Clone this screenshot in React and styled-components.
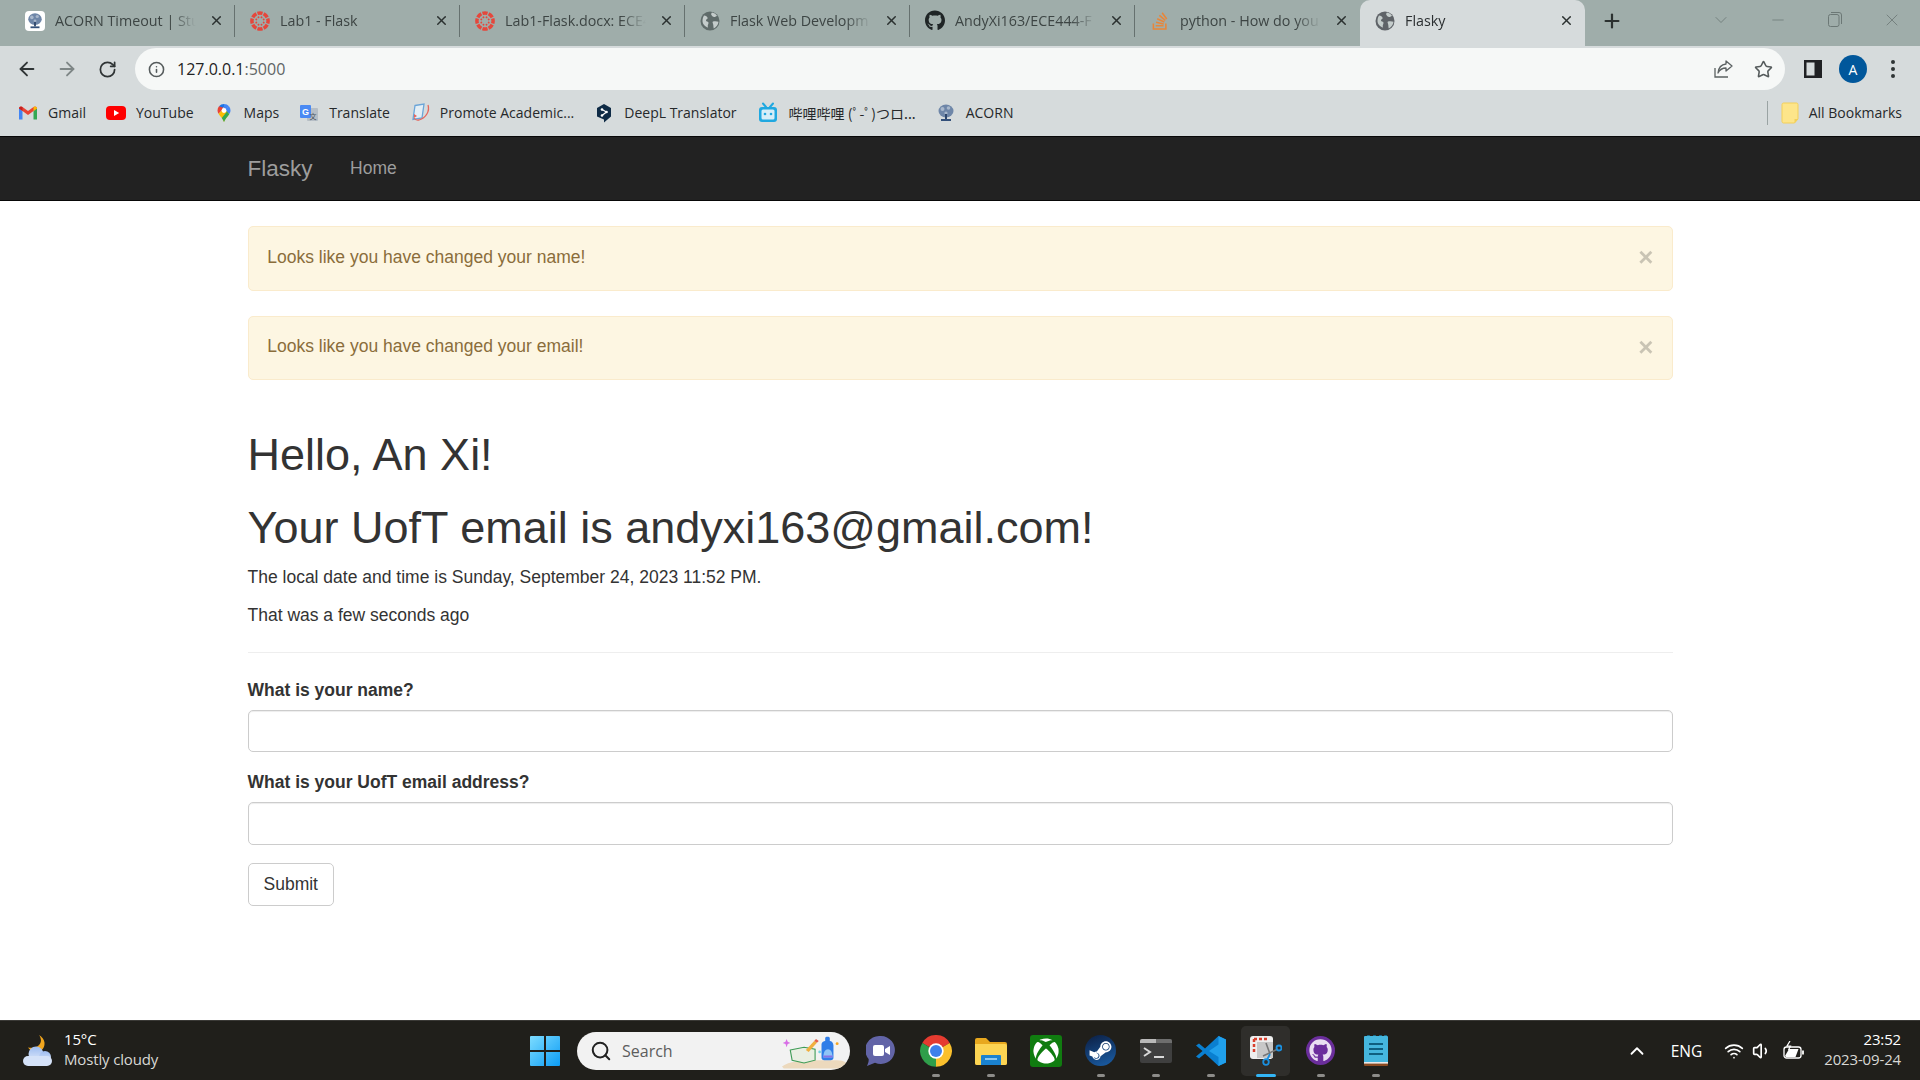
import React from "react";
import styled, { createGlobalStyle } from "styled-components";
import { FaGithub, FaSteamSymbol, FaXbox, FaStackOverflow } from "react-icons/fa";
import { Wifi, Volume1, ChevronUp, Search as SearchGlyph, ArrowLeft, ArrowRight, RotateCw, Info, Star, X, Plus, Minus, ChevronDown } from "lucide-react";

const GlobalStyle = createGlobalStyle`
  html, body { margin: 0; padding: 0; background: #fff; overflow: hidden; }
  * { box-sizing: border-box; }
`;

const UI_FONT = `"Open Sans", "Noto Sans", "Noto Sans CJK SC", sans-serif`;
const WEB_FONT = `"Liberation Sans", Arial, sans-serif`;

const Screen = styled.div`
  width: 1920px;
  height: 1080px;
  display: flex;
  flex-direction: column;
  overflow: hidden;
`;

/* ---------- browser chrome ---------- */
const TabStrip = styled.div`
  height: 46px;
  padding-left: 10px;
  background: #9fadaa;
  display: flex;
  align-items: stretch;
  flex: none;
`;

const Tab = styled.div`
  width: 225px;
  padding: 0 11px 5px 15px;
  display: flex;
  align-items: center;
  position: relative;
  font: 14.3px ${UI_FONT};
  color: ${({ $active }) => ($active ? "#2b2f31" : "#3d4544")};
  background: ${({ $active }) => ($active ? "#d6dbdc" : "transparent")};
  border-radius: ${({ $active }) => ($active ? "10px 10px 0 0" : "0")};

  &::after {
    content: "";
    display: ${({ $active, $last }) => ($active || $last ? "none" : "block")};
    position: absolute;
    right: 0;
    top: 5px;
    bottom: 9px;
    width: 1px;
    background: #66716f;
  }
`;

const TabIcon = styled.span`
  width: 20px;
  height: 20px;
  flex: none;
  display: flex;
  align-items: center;
  justify-content: center;
`;

const TabTitle = styled.span`
  margin-left: 10px;
  flex: 1;
  min-width: 0;
  white-space: nowrap;
  -webkit-mask-image: linear-gradient(to right, #000 82%, transparent 100%);
  mask-image: linear-gradient(to right, #000 82%, transparent 100%);
`;

const TabClose = styled.span`
  width: 16px;
  height: 16px;
  flex: none;
  margin-left: 12px;
  color: #2b3130;
  display: flex;
  align-items: center;
  justify-content: center;
`;

const NewTab = styled.div`
  width: 54px;
  padding-bottom: 5px;
  display: flex;
  align-items: center;
  justify-content: center;
  color: #2b3130;
`;

const WindowControls = styled.div`
  margin-left: auto;
  padding-bottom: 7px;
  display: flex;
  align-items: center;
  color: #6c7876;
`;

const WindowButton = styled.span`
  width: 57px;
  display: flex;
  justify-content: center;
`;

const Toolbar = styled.div`
  height: 46px;
  flex: none;
  background: #d6dbdc;
  display: flex;
  align-items: center;
  padding: 0 0 0 7px;
  color: #2f3435;
`;

const NavButton = styled.span`
  width: 40px;
  display: flex;
  justify-content: center;
  color: ${({ $muted }) => ($muted ? "#7e8686" : "#2f3435")};
`;

const Omnibox = styled.div`
  margin-left: 8px;
  margin-right: 8px;
  width: 1650px;
  height: 42px;
  border-radius: 21px;
  background: #f6f8f7;
  display: flex;
  align-items: center;
  padding: 0 2px 0 13px;
`;

const Url = styled.span`
  margin-left: 12px;
  font: 16px ${UI_FONT};
  color: #1f2324;
  flex: 1;
  & > em { font-style: normal; color: #5f6566; }
`;

const OmniAction = styled.span`
  width: 40px;
  display: flex;
  justify-content: center;
  color: #555b5c;
`;

const ToolAction = styled.span`
  width: 40px;
  display: flex;
  justify-content: center;
`;

const Avatar = styled.span`
  width: 28px;
  height: 28px;
  border-radius: 50%;
  background: #01579b;
  color: #fff;
  font: 14px ${UI_FONT};
  display: flex;
  align-items: center;
  justify-content: center;
`;

const BookmarkBar = styled.div`
  height: 44px;
  flex: none;
  background: #d6dbdc;
  display: flex;
  align-items: center;
  padding: 0 18px 3px;
  font: 14px ${UI_FONT};
  color: #26292b;
`;

const Bookmark = styled.div`
  display: flex;
  align-items: center;
  gap: ${({ $tight }) => ($tight ? "8px" : "10px")};
  margin-right: 20px;
  white-space: nowrap;
`;

const BookmarkLabel = styled.span`
  font-family: ${({ $cjk }) => ($cjk ? `"Noto Sans CJK JP", sans-serif` : "inherit")};
`;

const BookmarkEnd = styled.div`
  margin-left: auto;
  display: flex;
  align-items: center;
  gap: 10px;
  border-left: 1px solid #9aa3a3;
  height: 24px;
  padding-left: 13px;
  white-space: nowrap;
`;

/* ---------- flasky page ---------- */
const Navbar = styled.nav`
  height: 65px;
  flex: none;
  background: #222;
  border: 1.25px solid #080808;
  border-width: 1.25px 0;
  padding-left: 247.5px;
  display: flex;
  align-items: center;
  font-family: ${WEB_FONT};
  color: #9d9d9d;
`;

const Brand = styled.span`
  font-size: 22.5px;
`;

const NavLink = styled.span`
  font-size: 17.5px;
  margin-left: 37.5px;
`;

const Main = styled.main`
  flex: 1;
  min-height: 0;
  padding: 25px 247.5px 0;
  background: #fff;
  font: 17.5px/25px ${WEB_FONT};
  color: #333;
`;

const Alert = styled.div`
  height: 64.5px;
  margin-bottom: 25px;
  padding: 0 18px 2px 18.75px;
  display: flex;
  align-items: center;
  justify-content: space-between;
  background: #fdf6e2;
  border: 1.25px solid #faebcc;
  border-radius: 5px;
  color: #8a6d3b;
`;

const CloseMark = styled.span`
  font-size: 26px;
  font-weight: bold;
  color: #000;
  opacity: 0.2;
  line-height: 1;
`;

const Greeting = styled.section`
  margin-top: 50px;
`;

const Heading = styled.h1`
  margin: 23.5px 0 12.5px;
  font-size: 45px;
  line-height: 49.5px;
  font-weight: 500;
  color: #333;
`;

const Para = styled.p`
  margin: 0 0 12.5px;
`;

const Rule = styled.hr`
  margin: 24px 0 25px;
  border: 0;
  border-top: 1.25px solid #eee;
`;

const Field = styled.div`
  margin-bottom: 18.25px;
`;

const Label = styled.label`
  display: block;
  margin-bottom: 7px;
  font-weight: bold;
`;

const Input = styled.input`
  display: block;
  width: 100%;
  height: 42.5px;
  border: 1.25px solid #ccc;
  border-radius: 5px;
  background: #fff;
  box-shadow: inset 0 1px 1px rgba(0, 0, 0, 0.075);
`;

const SubmitButton = styled.button`
  height: 42.5px;
  padding: 0 15px;
  border: 1.25px solid #ccc;
  border-radius: 5px;
  background: #fff;
  font: 17.5px ${WEB_FONT};
  color: #333;
`;

/* ---------- taskbar ---------- */
const Taskbar = styled.footer`
  height: 60px;
  flex: none;
  background: #201f1b;
  border-top: 1px solid #3a3936;
  display: grid;
  grid-template-columns: 517.5px auto 1fr;
  align-items: center;
  font-family: ${UI_FONT};
  color: #fff;
`;

const Weather = styled.div`
  display: flex;
  align-items: center;
  padding-left: 22px;
  gap: 10px;
`;

const StackedText = styled.div`
  font-size: 15px;
  line-height: 20px;
  letter-spacing: -0.15px;
  padding-bottom: 4px;
  text-align: ${({ $right }) => ($right ? "right" : "left")};
  margin-left: ${({ $right }) => ($right ? "16px" : "0")};
  & > div:last-child { color: #d8d8d5; }
`;

const AppRow = styled.div`
  display: flex;
  align-items: center;
`;

const AppSlot = styled.div`
  width: 55px;
  height: 59px;
  display: flex;
  align-items: center;
  justify-content: center;
  position: relative;

  &::before {
    content: "";
    display: ${({ $active }) => ($active ? "block" : "none")};
    position: absolute;
    inset: 5px 3px 4px;
    background: rgba(255, 255, 255, 0.07);
    border-radius: 5px;
  }

  & > svg { position: relative; }

  &::after {
    content: "";
    display: ${({ $running }) => ($running ? "block" : "none")};
    position: absolute;
    left: 50%;
    bottom: 3px;
    transform: translateX(-50%);
    width: ${({ $active }) => ($active ? "20px" : "8px")};
    height: 3px;
    border-radius: 2px;
    background: ${({ $active }) => ($active ? "#33b5f5" : "#8d8c89")};
  }
`;

const SearchPill = styled.div`
  width: 273px;
  height: 38px;
  margin: 0 3px 0 4.5px;
  border-radius: 19px;
  background: #f2f2f2;
  display: flex;
  align-items: center;
  padding-left: 13px;
  overflow: hidden;
  color: #222;
`;

const SearchText = styled.span`
  margin-left: 10px;
  flex: 1;
  font-size: 16px;
  color: #5d5d5d;
`;

const Tray = styled.div`
  display: flex;
  align-items: center;
  justify-content: flex-end;
  padding-right: 19px;
`;

const TrayText = styled.span`
  font-size: 15.5px;
  margin: 0 18px 0 23px;
`;

const TrayIcon = styled.span`
  width: 28px;
  margin-left: ${({ $gap }) => ($gap ? "4px" : "0")};
  display: flex;
  justify-content: center;
`;

/* ---------- icons ---------- */
const Globe = ({ color = "#5f6b6a" }) => (
  <svg width="20" height="20" viewBox="0 0 20 20">
    <circle cx="10" cy="10" r="9.5" fill={color} />
    <path d="M4 4.5c2 .2 3.2 1 3.6 2.3.3 1-1 1.3-1.5 2.2-.5.9.8 1.6 1.6 1.8.9.2 1 1.4.6 2.2-.4.8-.9 1.8-.2 3.6-3-.9-5.600-3.600-5.600-6.600 0-2.200.6-4 1.500-5.500z" fill="#c4cccb" />
    <path d="M12 1.500c2 .3 3.800 1.500 5 3.200-1.200.6-1.600 1.400-2.800 1.300-1.500-.1-2.300-1.200-2.900-2.200-.4-.7 0-1.500.7-2.300zM13 10.500c1.500-.5 4-.4 5.500.2-.4 3-2.200 5.500-4.700 6.800-.5-1.500-.3-2.800-.6-4-.2-1.100-1.200-2.600-.2-3z" fill="#c4cccb" />
  </svg>
);

const Canvas = () => {
  const spokes = [0, 45, 90, 135, 180, 225, 270, 315];
  return (
    <svg width="22" height="22" viewBox="1.5 1.5 21 21">
      {spokes.map((a) => (
        <g key={a} transform={`rotate(${a} 12 12)`}>
          <path d="M8.800 2.200a10.200 10.200 0 0 1 6.400 0l-1.100 3.500a6.500 6.500 0 0 0-4.200 0z" fill="#e5473c" />
          <circle cx="12" cy="7.800" r="1" fill="#e5473c" transform="rotate(22.5 12 12)" />
        </g>
      ))}
    </svg>
  );
};

const Acorn = ({ size = 20 }) => (
  <svg width={size} height={size} viewBox="0 0 20 20">
    <ellipse cx="10" cy="8" rx="7.500" ry="6.500" fill="#6e86a8" />
    <circle cx="6.500" cy="6" r="2" fill="#a9b8cc" />
    <circle cx="12.500" cy="5" r="1.800" fill="#a9b8cc" />
    <circle cx="10" cy="10" r="1.600" fill="#a9b8cc" />
    <rect x="9" y="11" width="2" height="5" fill="#2e466b" />
    <rect x="5" y="16" width="10" height="2" fill="#33507a" />
  </svg>
);

const AcornTab = styled.span`
  width: 20px;
  height: 20px;
  border-radius: 4px;
  background: #fff;
  display: flex;
  align-items: center;
  justify-content: center;
`;

const Gmail = () => (
  <svg width="20" height="20" viewBox="0 0 20 20">
    <path d="M1 5v11.500h3.500V8z" fill="#4285f4" />
    <path d="M19 5v11.500h-3.500V8z" fill="#34a853" />
    <path d="M1 5.500C1 3.500 3 2.800 4.500 3.900L10 8l5.500-4.100C17 2.800 19 3.500 19 5.500L15.500 8 10 12 4.500 8z" fill="#ea4335" />
    <path d="M15.500 3.900C17 2.800 19 3.500 19 5.500L15.500 8z" fill="#fbbc04" />
    <path d="M4.500 3.900C3 2.800 1 3.500 1 5.500L4.500 8z" fill="#c5221f" />
  </svg>
);

const YouTube = () => (
  <svg width="20" height="20" viewBox="0 0 20 20">
    <rect y="3" width="20" height="14" rx="4" fill="#f00" />
    <path d="M8 7l5.200 3L8 13z" fill="#fff" />
  </svg>
);

const MapsPin = () => (
  <svg width="20" height="20" viewBox="0 0 20 20">
    <path d="M10 1a6.500 6.500 0 0 1 5 2.300L10 8z" fill="#4285f4" />
    <path d="M10 1a6.500 6.500 0 0 0-5 2.300l2.500 2.700L10 4z" fill="#1a73e8" />
    <path d="M5 3.300A6.500 6.500 0 0 0 3.500 7.500c0 1.200.5 2.300 1 3.200L10 5z" fill="#ea4335" />
    <path d="M15 3.300a6.500 6.500 0 0 1 1.500 4.200c0 1.500-.6 2.600-1.300 3.700L10 7z" fill="#4285f4" />
    <path d="M4.500 10.700l5.500-5 5.200 5.500c-1.500 2.300-4 4.300-5.200 7.800-1-3.300-4-5.800-5.500-8.300z" fill="#fbbc04" />
    <path d="M15.200 11.200c-1.500 2.300-4 4.300-5.200 7.800-.5-1.500-1.300-2.800-2.200-4L13 8.500z" fill="#34a853" />
    <circle cx="10" cy="7.500" r="2.400" fill="#fff" />
  </svg>
);

const Translate = () => (
  <svg width="20" height="20" viewBox="0 0 20 20">
    <rect x="8" y="5" width="11" height="13" rx="1" fill="#b6bec6" />
    <rect x="1" y="2" width="11" height="13" rx="1" fill="#4a8af4" />
    <text x="6.500" y="12" fontSize="9" fontFamily={WEB_FONT} fontWeight="bold" fill="#fff" textAnchor="middle">G</text>
    <text x="14" y="16" fontSize="7" fontFamily="Noto Sans CJK SC" fill="#4b5560" textAnchor="middle">文</text>
  </svg>
);

const Promote = () => (
  <svg width="22" height="22" viewBox="0 0 22 22" fill="none">
    <path d="M5 3.500l9-1.500-2 14-9 1.500z" stroke="#6aa5d8" strokeWidth="1.300" fill="#e3eef5" />
    <path d="M18 3c2 6-2 13-9 15-2 .5-4-.5-5-2" stroke="#e5665c" strokeWidth="1.300" />
    <path d="M4 12l3 2-3 2z" fill="#e5665c" />
  </svg>
);

const DeepL = () => (
  <svg width="20" height="20" viewBox="0 0 20 20">
    <path d="M10 1l7 4v8.500l-7 6v-3l-7-3V5z" fill="#0f2b46" />
    <path d="M8 6.500l4.500 2.500L8 12.500" stroke="#fff" strokeWidth="1.200" fill="none" />
    <circle cx="8" cy="6.500" r="1.300" fill="#fff" />
    <circle cx="12.500" cy="9" r="1.300" fill="#fff" />
    <circle cx="8" cy="12.500" r="1.300" fill="#fff" />
  </svg>
);

const Bili = () => (
  <svg width="22" height="22" viewBox="0 0 22 22">
    <path d="M6 1.500L9 5M16 1.500L13 5" stroke="#20a8e0" strokeWidth="2" strokeLinecap="round" />
    <rect x="2" y="5" width="18" height="15" rx="3" fill="#20a8e0" />
    <rect x="4.500" y="7.500" width="13" height="10" rx="1.500" fill="#d6eef8" />
    <circle cx="8" cy="12" r="1.300" fill="#20a8e0" />
    <circle cx="14" cy="12" r="1.300" fill="#20a8e0" />
  </svg>
);

const Folder = () => (
  <svg width="18" height="22" viewBox="0 0 18 22">
    <path d="M1 2.500C1 1.700 1.700 1 2.500 1h13c.8 0 1.500.7 1.500 1.500V17l-3.500 4h-11C1.700 21 1 20.300 1 19.500z" fill="#fde58a" stroke="#f3cf58" />
    <path d="M13.500 21v-4H17z" fill="#f3cf58" />
  </svg>
);

const SidePanel = () => (
  <svg width="18" height="18" viewBox="0 0 18 18">
    <rect width="18" height="18" fill="#202124" />
    <rect x="2.500" y="2.500" width="8" height="13" fill="#d6dbdc" />
  </svg>
);

const Share = () => (
  <svg width="20" height="20" viewBox="0 0 20 20" fill="none" stroke="#5b6162" strokeWidth="1.300">
    <path d="M2 9v9h13" />
    <path d="M13 2l6 5-6 5V9C9 9 6.500 11 5 14c.5-5 3.500-8.500 8-9z" strokeLinejoin="round" />
  </svg>
);

const Dots = () => (
  <svg width="6" height="20" viewBox="0 0 6 20" fill="#2f3435">
    <circle cx="3" cy="3" r="2" />
    <circle cx="3" cy="10" r="2" />
    <circle cx="3" cy="17" r="2" />
  </svg>
);

const Restore = () => (
  <svg width="14" height="15" viewBox="0 0 14 15" fill="none" stroke="currentColor">
    <rect x=".5" y="2.500" width="10.500" height="12" rx="2" />
    <path d="M3 .5h8a2.500 2.500 0 0 1 2.500 2.500v9" />
  </svg>
);

const WeatherIcon = () => (
  <svg width="32" height="36" viewBox="0 0 32 36">
    <defs>
      <linearGradient id="cloud" x1="0" y1="0" x2="0" y2="1">
        <stop offset="0" stopColor="#9dbcf0" />
        <stop offset="1" stopColor="#dfe9fa" />
      </linearGradient>
    </defs>
    <path d="M17 2c2.500 3.500 3 8-1 11-2.500 1.800-6 2-10 1.500 2 3 5 5 9 4.500 5-.5 8-4.500 7.500-9.500-.4-3-2.500-6-5.500-7.500z" fill="#f0a51e" />
    <circle cx="14" cy="21" r="7.500" fill="url(#cloud)" />
    <circle cx="23" cy="24" r="6" fill="url(#cloud)" />
    <rect x="1" y="23" width="29" height="10" rx="5" fill="#d5e2f8" />
  </svg>
);

const StartLogo = () => (
  <svg width="30" height="30" viewBox="0 0 30 30">
    <defs>
      <linearGradient id="win" x1="0" y1="0" x2="1" y2="1">
        <stop offset="0" stopColor="#7ddcff" />
        <stop offset="1" stopColor="#0c9cf5" />
      </linearGradient>
    </defs>
    <path d="M1 0h13v14H0V1a1 1 0 0 1 1-1zM16 0h13a1 1 0 0 1 1 1v13H16zM0 16h14v14H1a1 1 0 0 1-1-1zM16 16h14v13a1 1 0 0 1-1 1H16z" fill="url(#win)" />
  </svg>
);

const SearchArt = () => (
  <svg width="68" height="38" viewBox="0 0 74 38">
    <path d="M0 36c8-6 20-7 36-7h24c8 0 12 3 14 9H2z" fill="#ecd9bd" />
    <path d="M5 6l1.200 3 3 1.200-3 1.200L5 15l-1.200-3.600-3-1.200 3-1.200z" fill="#d86ee6" />
    <path d="M9 18l15-3 12 2v12l-12 3-13-3z" fill="#e9efe2" stroke="#3e9b55" strokeWidth="1.200" />
    <path d="M26 18l9-10 3 2-9 10z" fill="#f0b040" />
    <path d="M35 8l2-2 3 2-2 2z" fill="#e5604a" />
    <circle cx="41" cy="20" r="1.500" fill="#6fd4e0" />
    <path d="M43 12c0-3 3-4 4-4V5c0-2 5-2 5 0v3c2 0 4 2 4 5v13c0 2-1 3-3 3h-7c-2 0-3-1-3-3z" fill="#2f7de8" />
    <path d="M45 26c0-6 2-9 5-9s5 3 5 9z" fill="#8fc4f7" />
    <path d="M45 24h10v2H45z" fill="#8873e6" />
    <circle cx="60" cy="11" r="1.600" fill="#f5a623" />
  </svg>
);

const Meet = () => (
  <svg width="30" height="32" viewBox="0 0 30 32">
    <path d="M15 1a14 14 0 1 1-6 26.700L1 31c1-2 2-5 1.600-7A14 14 0 0 1 15 1z" fill="#6264a7" />
    <rect x="7" y="10" width="11" height="11" rx="2" fill="#fff" />
    <path d="M19 14l5-3v9l-5-3z" fill="#fff" />
  </svg>
);

const Chrome = () => (
  <svg width="32" height="32" viewBox="0 0 48 48">
    <path d="M24 24L3.500 12A23.500 23.500 0 0 1 44.500 12z" fill="#e53b30" />
    <path d="M24 24L44.500 12A23.700 23.700 0 0 1 24 47.700z" fill="#fbc02d" />
    <path d="M24 24L24 47.700A23.700 23.700 0 0 1 3.500 12z" fill="#2f9e4a" />
    <circle cx="24" cy="24" r="11.500" fill="#fff" />
    <circle cx="24" cy="24" r="9" fill="#3f80ea" />
  </svg>
);

const Files = () => (
  <svg width="32" height="28" viewBox="0 0 32 28">
    <path d="M0 3a2 2 0 0 1 2-2h9l4 4h15a2 2 0 0 1 2 2v19a2 2 0 0 1-2 2H2a2 2 0 0 1-2-2z" fill="#e8a81e" />
    <path d="M0 7h30a2 2 0 0 1 2 2v17a2 2 0 0 1-2 2H2a2 2 0 0 1-2-2z" fill="#fcd453" />
    <path d="M6 19a1 1 0 0 1 1-1h18a1 1 0 0 1 1 1v9H6z" fill="#1a82d0" />
    <rect x="10" y="21" width="12" height="2" fill="#8cc8f0" />
  </svg>
);

const XboxTile = styled.span`
  width: 32px;
  height: 32px;
  background: #107c10;
  border-radius: 3px;
  color: #fff;
  display: flex;
  align-items: center;
  justify-content: center;
`;

const SteamDisc = styled.span`
  width: 31px;
  height: 31px;
  border-radius: 50%;
  background: linear-gradient(160deg, #0c1e42, #1a5fa8);
  color: #fff;
  display: flex;
  align-items: center;
  justify-content: center;
`;

const Terminal = () => (
  <svg width="32" height="24" viewBox="0 0 32 24">
    <rect width="32" height="24" rx="2" fill="#3f3f3f" />
    <path d="M0 2a2 2 0 0 1 2-2h14v4H0z" fill="#b9b9b9" />
    <path d="M16 0h14a2 2 0 0 1 2 2v2H16z" fill="#6e6e6e" />
    <path d="M4 9l6 4-6 4" stroke="#d8d8d8" strokeWidth="2" fill="none" />
    <rect x="14" y="17" width="10" height="2" fill="#d8d8d8" />
  </svg>
);

const VsCode = () => (
  <svg width="32" height="32" viewBox="0 0 32 32">
    <path d="M23.500 1L31 4.500v23L23.500 31 10 18.500l-6 5L1 21.500 7.500 16 1 10.500l3-2 6 5z" fill="#0a7fd0" />
    <path d="M23.500 1L31 4.500v23L23.500 31V22L14 16l9.500-6.500z" fill="#20a0ec" />
  </svg>
);

const Snip = () => (
  <svg width="32" height="32" viewBox="0 0 32 32">
    <rect x="0" y="1" width="23" height="23" rx="3" fill="#efefef" />
    <path d="M4 4h13M4 4v13" stroke="#d9402e" strokeWidth="2.500" strokeDasharray="3 2" fill="none" />
    <path d="M7 7h16v16H7z" fill="#c8c8c8" />
    <path d="M16 8l4 11M28 14L13 21" stroke="#777" strokeWidth="1.600" />
    <circle cx="29" cy="13" r="2.500" stroke="#1a90e0" strokeWidth="1.800" fill="none" />
    <circle cx="16" cy="27" r="2.800" stroke="#1a90e0" strokeWidth="1.800" fill="none" />
    <path d="M20 19l-3 6" stroke="#1a90e0" strokeWidth="1.800" />
  </svg>
);

const GithubDisc = styled.span`
  width: 29px;
  height: 29px;
  border-radius: 50%;
  background: #6b2e9c;
  color: #e9dff2;
  display: flex;
  align-items: center;
  justify-content: center;
`;

const Notepad = () => (
  <svg width="24" height="32" viewBox="0 0 24 32">
    <rect y="1" width="24" height="28" rx="1" fill="#45b6de" />
    <rect y="28" width="24" height="3" rx="1" fill="#8b4a21" />
    <rect y="27" width="24" height="1.600" fill="#e8e8e8" />
    <path d="M3 1a1.500 1.500 0 0 1 3 0zM9 1a1.500 1.500 0 0 1 3 0zM15 1a1.500 1.500 0 0 1 3 0zM20 1a1.500 1.500 0 0 1 3 0z" fill="#1a6b8a" />
    <path d="M5 9h14M5 14h14M5 19h14" stroke="#0f5f80" strokeWidth="2" />
  </svg>
);

const Battery = () => (
  <svg width="22" height="20" viewBox="0 0 22 20" fill="none" stroke="#fff" strokeWidth="1.300">
    <rect x="1" y="6" width="17" height="11" rx="2.500" />
    <path d="M20 9.500v4" strokeWidth="1.800" />
    <path d="M2 15l4-7h9.500l-3 8H3z" fill="#fff" stroke="none" />
    <path d="M7 0L4 5h3.500L5.500 9" stroke="#fff" strokeWidth="1.200" />
  </svg>
);

/* ---------- data ---------- */
const tabs = [
  { title: "ACORN Timeout | Stu", icon: <AcornTab><Acorn size={18} /></AcornTab> },
  { title: "Lab1 - Flask", icon: <Canvas /> },
  { title: "Lab1-Flask.docx: ECE4", icon: <Canvas /> },
  { title: "Flask Web Developm", icon: <Globe /> },
  { title: "AndyXi163/ECE444-F", icon: <FaGithub size={21} color="#1f2526" /> },
  { title: "python - How do you", icon: <FaStackOverflow size={20} color="#e8863a" />, last: true },
  { title: "Flasky", icon: <Globe color="#5f6368" />, active: true },
];

const bookmarks = [
  { label: "Gmail", icon: <Gmail /> },
  { label: "YouTube", icon: <YouTube /> },
  { label: "Maps", icon: <MapsPin /> },
  { label: "Translate", icon: <Translate /> },
  { label: "Promote Academic...", icon: <Promote />, tight: true },
  { label: "DeepL Translator", icon: <DeepL /> },
  { label: "哔哩哔哩 (ﾟ-ﾟ)つロ...", icon: <Bili />, cjk: true },
  { label: "ACORN", icon: <Acorn /> },
];

const apps = [
  { key: "meet", icon: <Meet /> },
  { key: "chrome", icon: <Chrome />, running: true },
  { key: "files", icon: <Files />, running: true },
  { key: "xbox", icon: <XboxTile><FaXbox size={26} /></XboxTile> },
  { key: "steam", icon: <SteamDisc><FaSteamSymbol size={25} /></SteamDisc>, running: true },
  { key: "terminal", icon: <Terminal />, running: true },
  { key: "vscode", icon: <VsCode />, running: true },
  { key: "snip", icon: <Snip />, running: true, active: true },
  { key: "github", icon: <GithubDisc><FaGithub size={23} /></GithubDisc>, running: true },
  { key: "notepad", icon: <Notepad />, running: true },
];

const messages = ["Looks like you have changed your name!", "Looks like you have changed your email!"];

const App = () => {
  return (
    <Screen>
      <GlobalStyle />
      <TabStrip>
        {tabs.map((tab) => (
          <Tab key={tab.title} $active={tab.active} $last={tab.last}>
            <TabIcon>{tab.icon}</TabIcon>
            <TabTitle>{tab.title}</TabTitle>
            <TabClose><X size={15} strokeWidth={2.4} /></TabClose>
          </Tab>
        ))}
        <NewTab><Plus size={22} strokeWidth={2.4} /></NewTab>
        <WindowControls>
          <WindowButton><ChevronDown size={20} strokeWidth={1} /></WindowButton>
          <WindowButton><Minus size={18} strokeWidth={1} /></WindowButton>
          <WindowButton><Restore /></WindowButton>
          <WindowButton><X size={20} strokeWidth={1} /></WindowButton>
        </WindowControls>
      </TabStrip>

      <Toolbar>
        <NavButton><ArrowLeft size={22} /></NavButton>
        <NavButton $muted><ArrowRight size={22} /></NavButton>
        <NavButton><RotateCw size={19} strokeWidth={2.2} /></NavButton>
        <Omnibox>
          <Info size={17} color="#555b5c" strokeWidth={2.2} />
          <Url>127.0.0.1<em>:5000</em></Url>
          <OmniAction><Share /></OmniAction>
          <OmniAction><Star size={19} strokeWidth={2} /></OmniAction>
        </Omnibox>
        <ToolAction><SidePanel /></ToolAction>
        <ToolAction><Avatar>A</Avatar></ToolAction>
        <ToolAction><Dots /></ToolAction>
      </Toolbar>

      <BookmarkBar>
        {bookmarks.map((b) => (
          <Bookmark key={b.label} $tight={b.tight}>{b.icon}<BookmarkLabel $cjk={b.cjk}>{b.label}</BookmarkLabel></Bookmark>
        ))}
        <BookmarkEnd><Folder /><span>All Bookmarks</span></BookmarkEnd>
      </BookmarkBar>

      <Navbar>
        <Brand>Flasky</Brand>
        <NavLink>Home</NavLink>
      </Navbar>

      <Main>
        {messages.map((m) => (
          <Alert key={m}>
            <span>{m}</span>
            <CloseMark>×</CloseMark>
          </Alert>
        ))}
        <Greeting>
          <Heading>Hello, An Xi!</Heading>
          <Heading>Your UofT email is andyxi163@gmail.com!</Heading>
          <Para>The local date and time is Sunday, September 24, 2023 11:52 PM.</Para>
          <Para>That was a few seconds ago</Para>
        </Greeting>
        <Rule />
        <Field>
          <Label>What is your name?</Label>
          <Input type="text" />
        </Field>
        <Field>
          <Label>What is your UofT email address?</Label>
          <Input type="text" />
        </Field>
        <SubmitButton>Submit</SubmitButton>
      </Main>

      <Taskbar>
        <Weather>
          <WeatherIcon />
          <StackedText>
            <div>15°C</div>
            <div>Mostly cloudy</div>
          </StackedText>
        </Weather>
        <AppRow>
          <AppSlot><StartLogo /></AppSlot>
          <SearchPill>
            <SearchGlyph size={22} strokeWidth={2.2} />
            <SearchText>Search</SearchText>
            <SearchArt />
          </SearchPill>
          {apps.map((app) => (
            <AppSlot key={app.key} $running={app.running} $active={app.active}>{app.icon}</AppSlot>
          ))}
        </AppRow>
        <Tray>
          <ChevronUp size={22} />
          <TrayText>ENG</TrayText>
          <TrayIcon><Wifi size={20} /></TrayIcon>
          <TrayIcon><Volume1 size={20} /></TrayIcon>
          <TrayIcon $gap><Battery /></TrayIcon>
          <StackedText $right>
            <div>23:52</div>
            <div>2023-09-24</div>
          </StackedText>
        </Tray>
      </Taskbar>
    </Screen>
  );
};

export default App;
